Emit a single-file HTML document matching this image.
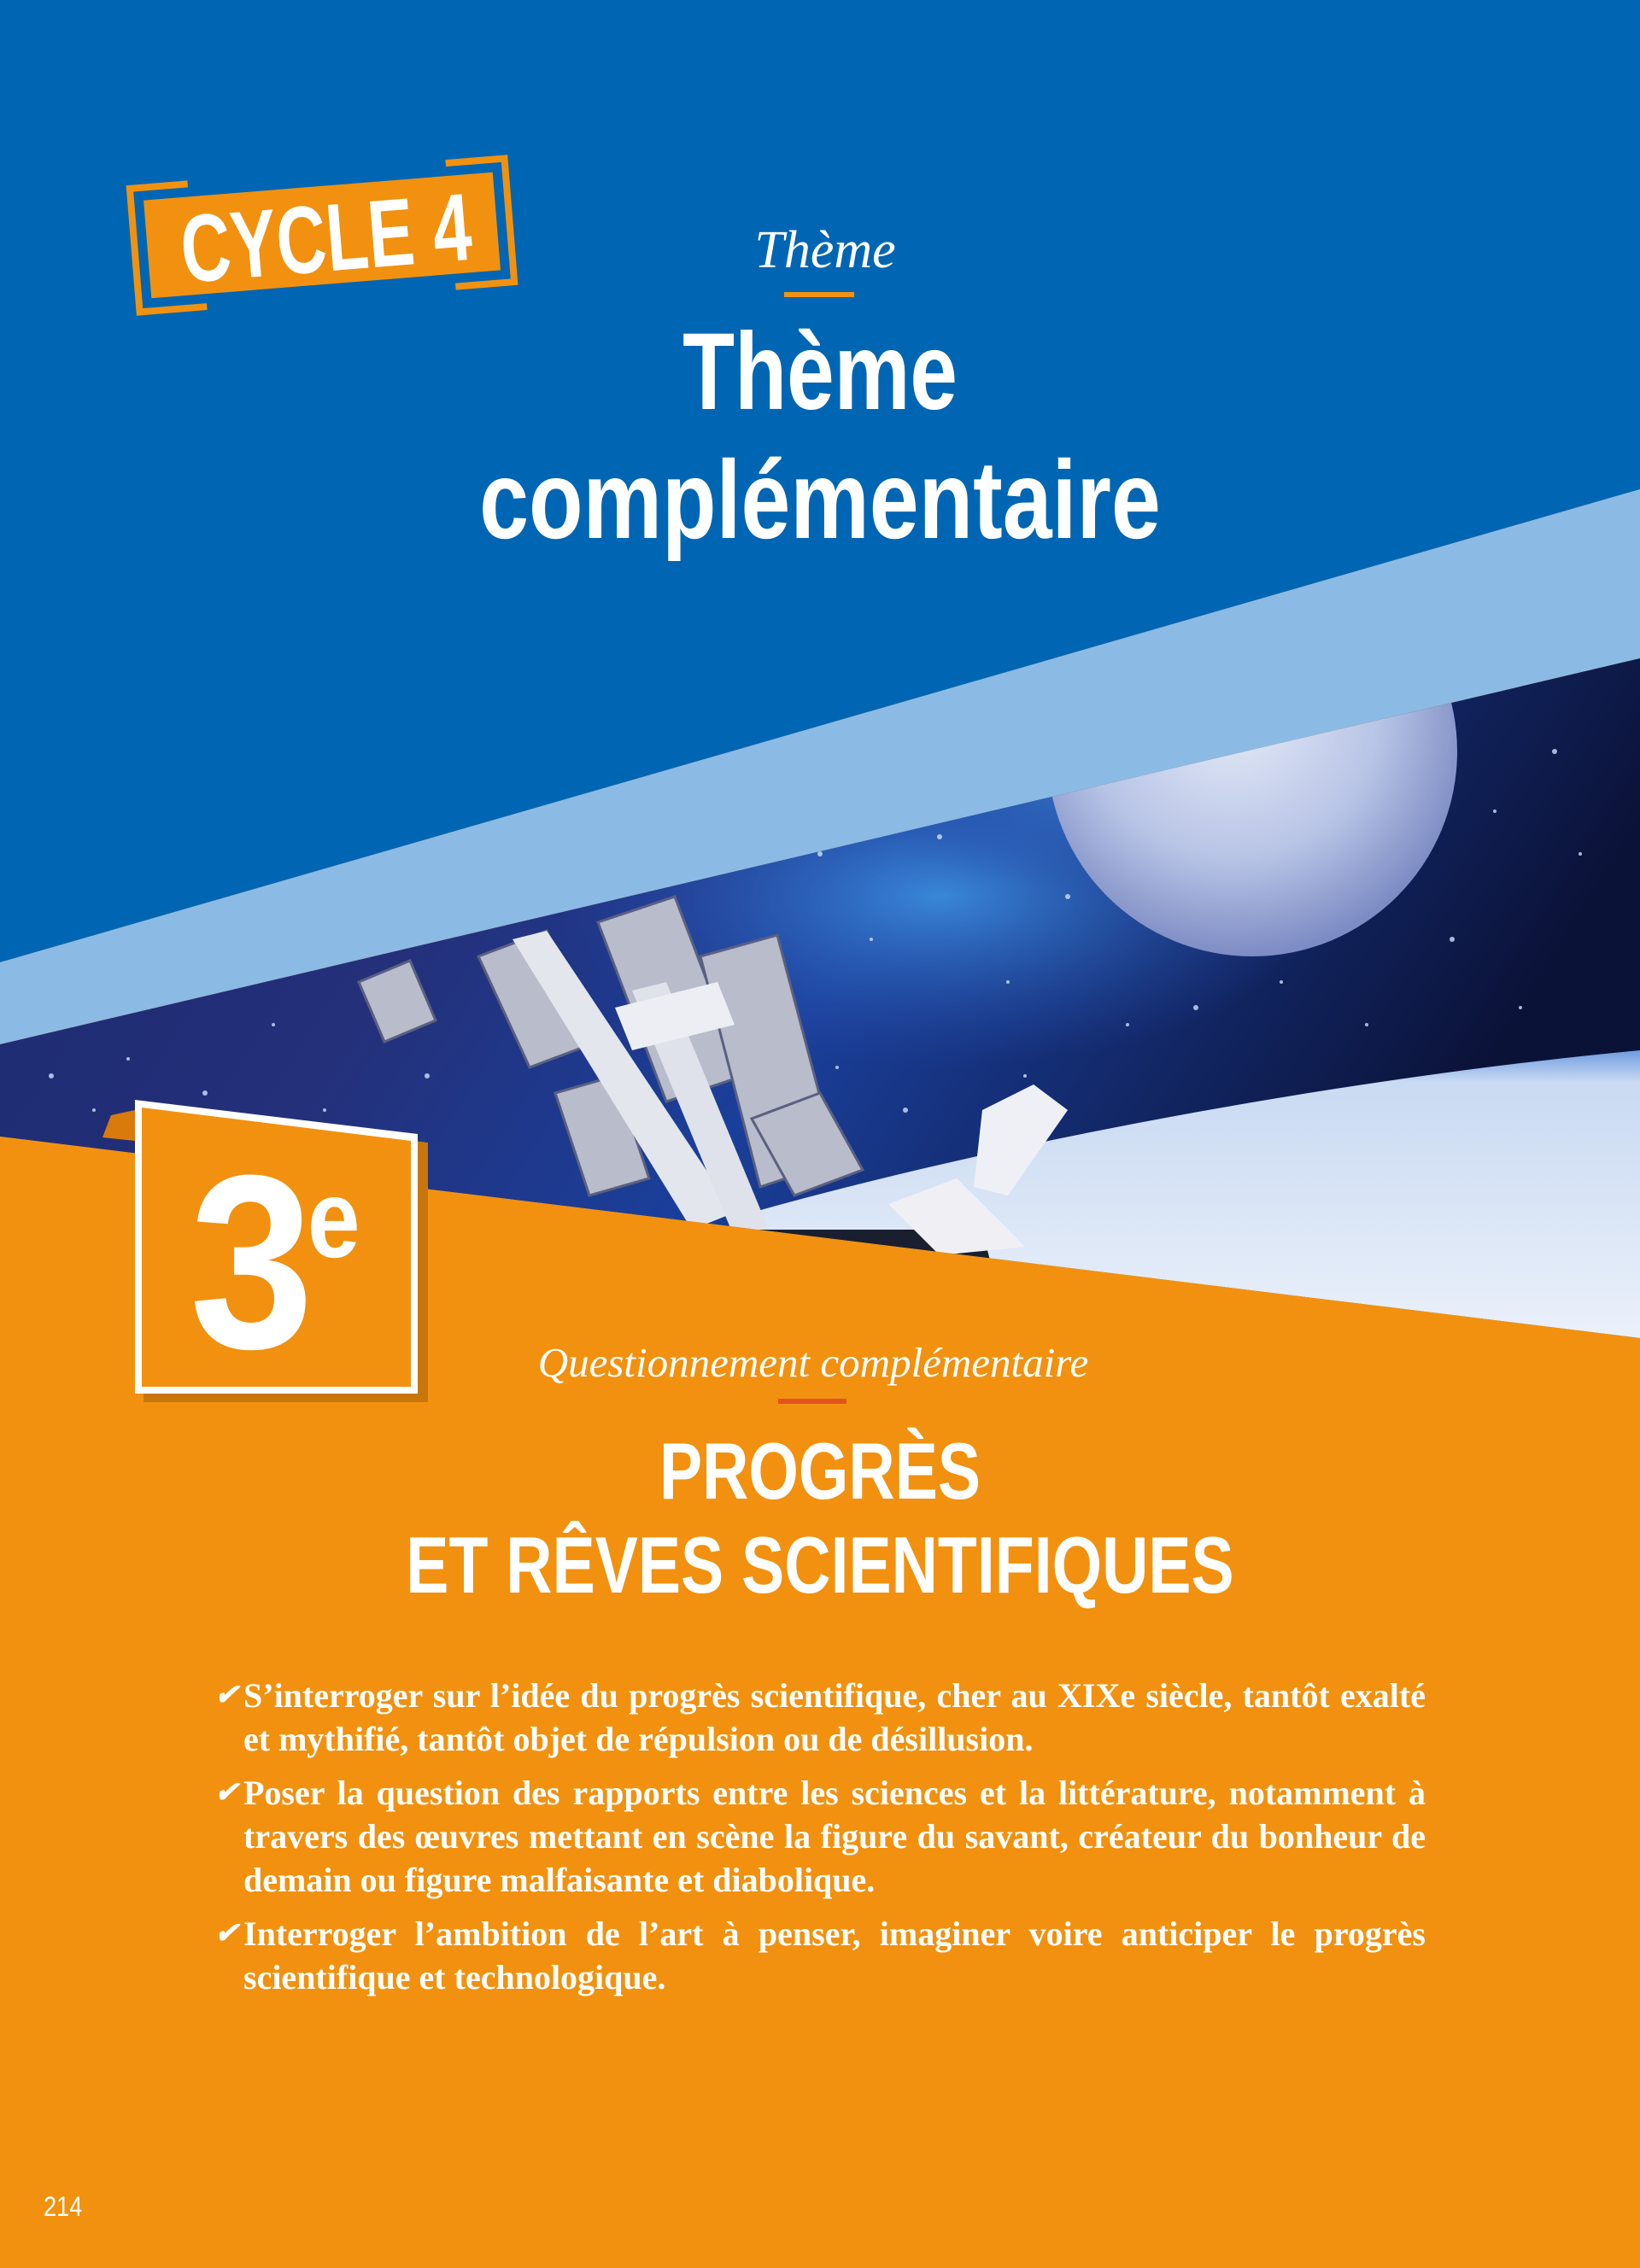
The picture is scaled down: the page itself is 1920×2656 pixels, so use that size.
<!DOCTYPE html>
<html><head><meta charset="utf-8">
<style>
html,body{margin:0;padding:0}
body{width:1920px;height:2656px;position:relative;overflow:hidden;background:#f2910f;font-family:"Liberation Sans",sans-serif}
.abs{position:absolute}
.cond{font-family:"Liberation Sans",sans-serif;font-weight:bold;color:#fff;white-space:nowrap}
.script{font-family:"Liberation Serif",serif;font-style:italic;color:#fff;white-space:nowrap}
.bul{position:absolute;left:285px;width:1384px;font-family:"Liberation Serif",serif;font-weight:bold;font-size:40px;line-height:51px;color:#fff;text-align:justify;text-align-last:left}
.bul .ck{position:absolute;left:-34px;top:0;font-size:34px;font-style:italic}
</style></head><body>
<svg class="abs" style="left:0;top:0" width="1920" height="2656" viewBox="0 0 1920 2656">
<defs>
<linearGradient id="sky" x1="0" y1="0" x2="1" y2="0.3">
<stop offset="0" stop-color="#1a2a6e"/><stop offset="0.35" stop-color="#24307a"/><stop offset="0.6" stop-color="#1a3f9a"/><stop offset="1" stop-color="#0b1238"/>
</linearGradient>
<radialGradient id="neb" cx="0.5" cy="0.5" r="0.5">
<stop offset="0" stop-color="#3d8fe0" stop-opacity="0.9"/><stop offset="1" stop-color="#2a4fb0" stop-opacity="0"/>
</radialGradient>
<radialGradient id="moon" cx="0.45" cy="0.4" r="0.6">
<stop offset="0" stop-color="#e6ecf8"/><stop offset="0.6" stop-color="#b8c4e6"/><stop offset="1" stop-color="#7d8cc4"/>
</radialGradient>
<linearGradient id="earth" x1="0" y1="0" x2="0" y2="1">
<stop offset="0" stop-color="#6f9be0"/><stop offset="0.1" stop-color="#c9daf2"/><stop offset="1" stop-color="#eef3fb"/>
</linearGradient>
<clipPath id="ph"><polygon points="0,1223 1920,771 1920,1567 0,1331"/></clipPath>
</defs>
<rect x="0" y="0" width="1920" height="2656" fill="#f2910f"/>
<polygon points="0,0 1920,0 1920,573 0,1127" fill="#0066b3"/>
<polygon points="0,1127 1920,573 1920,771 0,1223" fill="#8bbbe4"/>
<g clip-path="url(#ph)">
<rect x="0" y="700" width="1920" height="900" fill="url(#sky)"/>
<ellipse cx="1100" cy="1050" rx="450" ry="200" fill="url(#neb)"/>
<ellipse cx="1300" cy="900" rx="300" ry="150" fill="url(#neb)"/>
<g fill="#cfe0ff" opacity="0.8">
<circle cx="60" cy="1260" r="3"/><circle cx="150" cy="1240" r="2"/><circle cx="240" cy="1280" r="3"/><circle cx="320" cy="1200" r="2"/><circle cx="380" cy="1300" r="2"/><circle cx="110" cy="1300" r="2"/><circle cx="500" cy="1260" r="3"/><circle cx="960" cy="1000" r="3"/><circle cx="1020" cy="1100" r="2"/><circle cx="1100" cy="980" r="3"/><circle cx="1180" cy="1150" r="2"/><circle cx="1250" cy="1050" r="3"/><circle cx="1320" cy="1200" r="2"/><circle cx="1400" cy="1180" r="3"/><circle cx="1500" cy="1150" r="2"/><circle cx="1600" cy="1200" r="2"/><circle cx="1700" cy="1100" r="3"/><circle cx="1780" cy="1180" r="2"/><circle cx="1850" cy="1000" r="2"/><circle cx="1820" cy="880" r="3"/><circle cx="1750" cy="950" r="2"/><circle cx="980" cy="1250" r="2"/><circle cx="1060" cy="1300" r="3"/><circle cx="880" cy="1150" r="2"/><circle cx="1200" cy="1260" r="2"/>
</g>
<circle cx="1466" cy="880" r="240" fill="url(#moon)"/>
<path d="M880,1420 C1200,1330 1600,1260 1920,1230 L1920,1600 L880,1600Z" fill="url(#earth)"/>
<g fill="#b8bccb" stroke="#5a6080" stroke-width="3">
<polygon points="560,1120 640,1090 700,1220 620,1250"/>
<polygon points="420,1150 480,1125 510,1195 450,1220"/>
<polygon points="700,1080 790,1050 870,1260 780,1290"/>
<polygon points="820,1120 910,1095 980,1360 890,1390"/>
<polygon points="880,1310 960,1280 1010,1370 930,1400"/>
<polygon points="650,1280 720,1260 760,1380 690,1400"/>
</g>
<polygon points="600,1100 640,1090 860,1420 810,1440" fill="#e4e6ee"/>
<polygon points="740,1160 780,1150 900,1440 860,1450" fill="#dfe2ea"/>
<polygon points="720,1180 840,1150 860,1200 740,1230" fill="#eceef4"/>
<polygon points="880,1440 1150,1440 1160,1480 900,1480" fill="#1a1f30"/>
<polygon points="1040,1410 1120,1380 1200,1460 1100,1470" fill="#f0f0f4"/>
<polygon points="1150,1300 1210,1270 1250,1300 1180,1400 1140,1390" fill="#eef0f6"/>
</g>
<polygon points="0,1331 1920,1567 1920,2656 0,2656" fill="#f2910f"/>
<polygon points="130,1306 158,1300 158,1336 120,1332" fill="#d97a0c"/>
<!-- 3e box -->
<polygon points="168,1298 501,1338 501,1642 168,1642" fill="#c8760c"/>
<polygon points="158,1288 489,1328 489,1632 158,1632" fill="#fff"/>
<polygon points="166,1297 481,1336 481,1624 166,1624" fill="#f2910f"/>
<!-- cycle box -->
<g transform="rotate(-4.6 377 275)">
<rect x="172" y="218" width="410" height="115" fill="#f2910f"/>
<path d="M225,203 H157 V348 H236" fill="none" stroke="#f2910f" stroke-width="8"/>
<path d="M528,203 H597 V348 H528" fill="none" stroke="#f2910f" stroke-width="8"/>
</g>
<rect x="918" y="342" width="82" height="6" fill="#f2910f"/>
<rect x="911" y="1638" width="80" height="6" fill="#e2541b"/>
</svg>

<div class="abs cond" style="left:212px;top:238px;font-size:112px;line-height:110px;transform:rotate(-4.6deg) scaleX(0.72);transform-origin:0 50%">CYCLE 4</div>

<div class="abs script" style="left:0;width:1932px;text-align:center;top:258px;font-size:62px;line-height:70px">Thème</div>
<div class="abs cond" style="left:0;width:1920px;text-align:center;top:366px;font-size:128px;line-height:140px;transform:scaleX(0.78)">Thème</div>
<div class="abs cond" style="left:0;width:1920px;text-align:center;top:515px;font-size:130px;line-height:140px;transform:scaleX(0.8)">complémentaire</div>

<div class="abs cond" style="left:222px;top:1328px;font-size:290px;line-height:300px;transform:scaleX(0.9);transform-origin:0 0">3</div>
<div class="abs cond" style="left:360px;top:1362px;font-size:130px;line-height:130px;transform:scaleX(0.85);transform-origin:0 0">e</div>

<div class="abs script" style="left:0;width:1904px;text-align:center;top:1564px;font-size:49px;line-height:64px">Questionnement complémentaire</div>
<div class="abs cond" style="left:0;width:1920px;text-align:center;top:1670px;font-size:94px;line-height:106px;transform:scaleX(0.8)">PROGRÈS</div>
<div class="abs cond" style="left:0;width:1920px;text-align:center;top:1780px;font-size:94px;line-height:106px;transform:scaleX(0.8)">ET RÊVES SCIENTIFIQUES</div>

<div class="bul" style="top:1960px"><span class="ck">✔</span>S’interroger sur l’idée du progrès scientifique, cher au XIXe siècle, tantôt exalté et mythifié, tantôt objet de répulsion ou de désillusion.</div>
<div class="bul" style="top:2074px"><span class="ck">✔</span>Poser la question des rapports entre les sciences et la littérature, notamment à travers des œuvres mettant en scène la figure du savant, créateur du bonheur de demain ou figure malfaisante et diabolique.</div>
<div class="bul" style="top:2239px"><span class="ck">✔</span>Interroger l’ambition de l’art à penser, imaginer voire anticiper le progrès scientifique et technologique.</div>

<div class="abs" style="left:51px;top:2566px;font-size:32px;color:#fff;font-family:'Liberation Sans',sans-serif;transform:scaleX(0.85);transform-origin:0 0">214</div>
</body></html>
